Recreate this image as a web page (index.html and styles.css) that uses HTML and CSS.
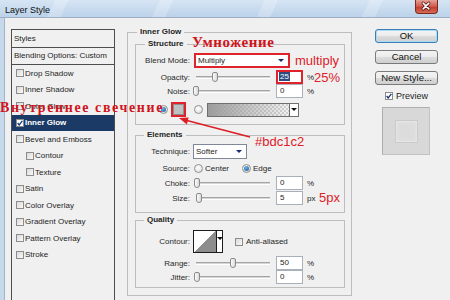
FILE: index.html
```html
<!DOCTYPE html>
<html lang="ru">
<head>
  <meta charset="UTF-8">
  <meta name="viewport" content="width=device-width, initial-scale=1.0">
  <title>Layer Style</title>
  <link rel="stylesheet" href="styles.css">
</head>
<body>
  <div class="titlebar">
    <span class="title">Layer Style</span>
    <span class="close">
      <svg width="23" height="14" viewBox="0 0 23 14">
        <path d="M8.5 4l6 6M14.5 4l-6 6" stroke="#4a1511" stroke-width="3.2" stroke-linecap="round"/>
        <path d="M8.5 4l6 6M14.5 4l-6 6" stroke="#fff" stroke-width="1.6" stroke-linecap="round"/>
      </svg>
    </span>
  </div>

  <div class="frame">
    <!-- styles list -->
    <div class="styles">
      <div class="styles-head">Styles</div>
      <div class="styles-head blending">Blending Options: Custom</div>
      <ul class="fx-list">
        <li><span class="cb"></span>Drop Shadow</li>
        <li><span class="cb"></span>Inner Shadow</li>
        <li><span class="cb"></span>Outer Glow</li>
        <li class="selected"><span class="cb"><svg width="6" height="6" viewBox="0 0 6 6"><path d="M0.6 3l1.6 2L5.4 0.8" fill="none" stroke="#1b3578" stroke-width="1.3"/></svg></span>Inner Glow</li>
        <li><span class="cb"></span>Bevel and Emboss</li>
        <li class="sub"><span class="cb"></span>Contour</li>
        <li class="sub"><span class="cb"></span>Texture</li>
        <li><span class="cb"></span>Satin</li>
        <li><span class="cb"></span>Color Overlay</li>
        <li><span class="cb"></span>Gradient Overlay</li>
        <li><span class="cb"></span>Pattern Overlay</li>
        <li><span class="cb"></span>Stroke</li>
      </ul>
    </div>

    <!-- settings -->
    <fieldset class="group outer">
      <legend>Inner Glow</legend>

      <fieldset class="group structure">
        <legend>Structure</legend>
        <div class="row tall">
          <span class="lbl">Blend Mode:</span>
          <span class="select marked blend-mode">Multiply<i class="arrow"></i></span>
        </div>
        <div class="row opacity">
          <span class="lbl">Opacity:</span>
          <span class="slider"><span class="track"></span><span class="thumb" style="left: 18px"></span></span>
          <span class="field marked"><span class="hl">25</span></span>
          <span class="unit">%</span>
        </div>
        <div class="row">
          <span class="lbl">Noise:</span>
          <span class="slider"><span class="track"></span><span class="thumb" style="left: -1px"></span></span>
          <span class="field">0</span>
          <span class="unit">%</span>
        </div>
        <div class="row tall color-row">
          <span class="radio on"></span>
          <span class="swatch"></span>
          <span class="radio"></span>
          <span class="gradient"><span class="gradient-fill"></span><span class="drop"><i class="arrow dark"></i></span></span>
        </div>
      </fieldset>

      <fieldset class="group elements">
        <legend>Elements</legend>
        <div class="row tall">
          <span class="lbl">Technique:</span>
          <span class="select technique">Softer<i class="arrow"></i></span>
        </div>
        <div class="row source">
          <span class="lbl">Source:</span>
          <span class="radio"></span><span class="opt">Center</span>
          <span class="radio on edge"></span><span class="opt">Edge</span>
        </div>
        <div class="row slim">
          <span class="lbl">Choke:</span>
          <span class="slider"><span class="track"></span><span class="thumb" style="left: 0px"></span></span>
          <span class="field">0</span>
          <span class="unit">%</span>
        </div>
        <div class="row slim">
          <span class="lbl">Size:</span>
          <span class="slider"><span class="track"></span><span class="thumb" style="left: 2px"></span></span>
          <span class="field">5</span>
          <span class="unit">px</span>
        </div>
      </fieldset>

      <fieldset class="group quality">
        <legend>Quality</legend>
        <div class="row contour-row">
          <span class="lbl">Contour:</span>
          <span class="contour"><span class="curve"></span><span class="drop"><i class="arrow dark"></i></span></span>
          <span class="cb anti"></span><span class="opt">Anti-aliased</span>
        </div>
        <div class="row range">
          <span class="lbl">Range:</span>
          <span class="slider"><span class="track"></span><span class="thumb" style="left: 36px"></span></span>
          <span class="field">50</span>
          <span class="unit">%</span>
        </div>
        <div class="row">
          <span class="lbl">Jitter:</span>
          <span class="slider"><span class="track"></span><span class="thumb" style="left: 0px"></span></span>
          <span class="field">0</span>
          <span class="unit">%</span>
        </div>
      </fieldset>
    </fieldset>

    <!-- buttons -->
    <div class="side">
      <button class="btn default">OK</button>
      <button class="btn">Cancel</button>
      <button class="btn">New Style...</button>
      <div class="preview-toggle">
        <span class="cb"><svg width="6" height="6" viewBox="0 0 6 6"><path d="M0.6 3l1.6 2L5.4 0.8" fill="none" stroke="#1b3578" stroke-width="1.3"/></svg></span>Preview
      </div>
      <div class="preview"><div class="preview-inner"></div></div>
    </div>
  </div>

  <!-- red notes drawn over the dialog -->
  <span class="note ru note-mult">Умножение</span>
  <span class="note ru note-inner">Внутреннее свечение</span>
  <span class="note note-multiply">multiply</span>
  <span class="note note-opacity">25%</span>
  <span class="note note-color">#bdc1c2</span>
  <span class="note note-size">5px</span>
  <svg class="pointer" width="90" height="32" viewBox="0 0 90 32">
    <line x1="80" y1="27" x2="15" y2="10" stroke="#dc1f27" stroke-width="1.8"/>
    <polygon points="9,8 16.9,14.4 18.6,7.6" fill="#dc1f27"/>
  </svg>
</body>
</html>
```

FILE: styles.css
```css
* {
  box-sizing: border-box;
}
body {
  margin: 0;
  width: 450px;
  height: 300px;
  overflow: hidden;
  position: relative;
  background: #f0f0f0;
  font-family: "Liberation Sans", Arial, sans-serif;
  font-size: 8px;
  color: #1e1e1e;
}

/* title bar */
.titlebar {
  height: 18px;
  display: flex;
  justify-content: space-between;
  align-items: flex-start;
  padding-left: 5px;
  border-bottom: 1px solid #9cafc4;
  background:
    repeating-linear-gradient(115deg, rgba(255,255,255,0) 0 50px, rgba(255,255,255,.22) 50px 62px, rgba(255,255,255,0) 62px 95px),
    linear-gradient(#d6e5f4, #bcd2ea);
}
.title {
  margin-top: 4px;
  font-size: 9px;
  line-height: 12px;
  color: #111;
}
.close {
  width: 23px;
  height: 14px;
  margin-right: 12px;
  border: 1px solid #7a2a22;
  border-top: none;
  border-radius: 0 0 4px 4px;
  background: linear-gradient(#e6a196, #d0584a 50%, #c23a2a 52%, #d66a55);
  display: flex;
}
.close svg {
  margin: -1px 0 0 -1px;
}

.frame {
  height: 282px;
  display: flex;
  align-items: flex-start;
  padding: 9px 0 0 7px;
  border-left: 4px solid #c6d8eb;
  box-shadow: inset 1px 0 #a5b4c4;
}

/* styles list */
.styles {
  width: 104px;
  height: 280px;
  margin-top: 2px;
  border: 1px solid #4d4d4d;
}
.styles-head {
  height: 18px;
  line-height: 17px;
  padding-left: 2px;
  border-bottom: 1px solid #4d4d4d;
}
.styles-head.blending {
  height: 17px;
  line-height: 16px;
}
.fx-list {
  list-style: none;
  margin: 0;
  padding: 0;
}
.fx-list li {
  height: 16.5px;
  display: flex;
  align-items: center;
  padding-left: 4px;
}
.fx-list li.sub {
  padding-left: 14px;
}
.fx-list li.selected {
  background: #1b3a66;
  color: #fff;
  font-weight: bold;
}
.cb {
  width: 8px;
  height: 8px;
  margin-right: 1px;
  border: 1px solid #8c8c8c;
  background: linear-gradient(135deg, #d9d9d9, #fafafa);
  display: inline-flex;
  align-items: center;
  justify-content: center;
  flex: none;
}
.selected .cb {
  background: #fff;
}

/* group boxes */
.group {
  margin: 0;
  padding: 0;
  border: 1px solid #bdbdbd;
  min-width: 0;
}
.group legend {
  padding: 0 3px;
  margin-left: 8px;
  font-weight: bold;
  line-height: 10px;
}
.outer {
  width: 225px;
  margin-left: 12px;
  padding: 0 6px 7px 7px;
}
.outer > legend {
  margin-left: 2px;
}
.structure {
  margin-top: 2px;
  padding: 4px 0 7px;
}
.structure > legend {
  margin-left: 9px;
}
.elements {
  margin-top: 5px;
  padding: 4px 0 7px;
}
.quality {
  margin-top: 2px;
  padding: 5px 0 3px;
}

/* rows */
.row {
  height: 14px;
  display: flex;
  align-items: center;
}
.row.tall {
  height: 15px;
}
.row.opacity,
.row.source {
  margin-top: 2px;
}
.row.slim {
  margin-top: 1px;
}
.row.color-row {
  margin-top: 4px;
}
.row.contour-row {
  height: 23px;
}
.row.range {
  margin-top: 3px;
}
.lbl {
  width: 54px;
  margin-right: 4px;
  text-align: right;
  color: #2a2a2a;
}
.unit {
  margin-left: 4px;
}
.opt {
  margin-left: 2px;
}

.select {
  height: 15px;
  display: flex;
  align-items: center;
  padding: 0 4px 0 2px;
  background: #fff;
  border: 1px solid #7e8896;
}
.blend-mode {
  width: 96px;
}
.technique {
  width: 54px;
  margin-left: -1px;
}
.marked {
  border: 2px solid #e0222a;
}
.arrow {
  margin-left: auto;
  width: 0;
  height: 0;
  border-left: 3px solid transparent;
  border-right: 3px solid transparent;
  border-top: 3px solid #1b2c6e;
}
.arrow.dark {
  margin: 0;
  border-top-color: #111;
}

.slider {
  position: relative;
  width: 77px;
  height: 10px;
  margin-right: 5px;
  display: flex;
  align-items: center;
}
.track {
  flex: 1;
  height: 3px;
  margin: 0 1px 0 2px;
  background: #d6d6d6;
  border-top: 1px solid #a4a4a4;
  border-bottom: 1px solid #fff;
}
.thumb {
  position: absolute;
  top: 0;
  width: 6px;
  height: 10px;
  border: 1px solid #8a8a8a;
  border-radius: 2px 2px 3px 3px;
  background: linear-gradient(90deg, #fdfdfd, #d9d9d9);
}

.field {
  width: 27px;
  height: 14px;
  padding-left: 3px;
  line-height: 12px;
  background: #fff;
  border: 1px solid #a9b0b9;
}
.field.marked {
  border: 2px solid #e0222a;
  padding-left: 1px;
  line-height: 10px;
}
.hl {
  background: #2b4c7c;
  color: #fff;
  padding: 0 1px;
}

.radio {
  width: 9px;
  height: 9px;
  border-radius: 50%;
  border: 1px solid #8f8f8f;
  background: radial-gradient(circle at 40% 35%, #fff, #dadada);
  display: inline-flex;
  align-items: center;
  justify-content: center;
  flex: none;
}
.radio.on::after {
  content: "";
  width: 5px;
  height: 5px;
  border-radius: 50%;
  background: radial-gradient(circle at 40% 35%, #6fb3ea, #134f8e);
}
.radio.edge {
  margin-left: 13px;
}

.color-row .radio.on {
  margin-left: 23px;
}
.swatch {
  width: 15px;
  height: 15px;
  margin: 0 8px 0 3px;
  border: 2px solid #e0222a;
  background: #bdc1c2;
  box-shadow: inset 0 0 0 1px #8c8f90;
}
.gradient {
  width: 92px;
  height: 14px;
  margin-left: 4px;
  display: flex;
  border: 1px solid #6f6f6f;
  background: #fff;
}
.gradient-fill {
  flex: 1;
  background:
    linear-gradient(90deg, #9c9c9c, rgba(170,170,170,0.15)),
    repeating-conic-gradient(#d6d6d6 0 25%, #fff 0 50%) 0 0 / 4px 4px;
}
.drop {
  width: 9px;
  display: flex;
  align-items: center;
  justify-content: center;
  border-left: 1px solid #6f6f6f;
  background: #fff;
}

.contour {
  width: 30px;
  height: 23px;
  margin-left: -1px;
  display: flex;
  border: 1px solid #1c1c1c;
  background: #fff;
}
.curve {
  flex: 1;
  background: linear-gradient(to top left, #8d8d8d 50%, #fff 50%);
}
.contour .drop {
  width: 6px;
  border-left: 1px solid #1c1c1c;
  align-items: flex-start;
  padding-top: 6px;
}
.cb.anti {
  margin-left: 12px;
}

/* right side */
.side {
  width: 63px;
  margin: 2px 0 0 23px;
  display: flex;
  flex-direction: column;
}
.btn {
  height: 14px;
  margin: 0 0 7px;
  padding: 0;
  font-family: inherit;
  font-size: 9.5px;
  line-height: 12px;
  color: #111;
  border: 1px solid #7a7a7a;
  border-radius: 3px;
  background: linear-gradient(#f4f4f4, #ebebeb 50%, #dcdcdc 51%, #cfcfcf);
}
.btn.default {
  border-color: #3d7db5;
  box-shadow: inset 0 0 0 1px #a8dcf5;
}
.preview-toggle {
  height: 10px;
  margin: -1px 0 0 10px;
  display: flex;
  align-items: center;
  font-size: 9px;
}
.preview-toggle .cb {
  margin-right: 3px;
  background: #fff;
}
.preview {
  width: 48px;
  height: 48px;
  margin: 6px 0 0 7px;
  display: flex;
  align-items: center;
  justify-content: center;
  background: #d8d8d8;
  border: 1px solid #c2c2c2;
  border-top-color: #aeaeae;
  border-left-color: #aeaeae;
}
.preview-inner {
  width: 23px;
  height: 23px;
  background: #dcdcdc;
  border: 1px solid #cbcbcb;
  box-shadow: inset 0 0 3px 1px #e8e8e8;
}

/* annotations */
.note {
  position: absolute;
  color: #de2028;
  font-size: 13px;
  line-height: 13px;
  white-space: nowrap;
}
.note.ru {
  font-family: "Liberation Serif", "Times New Roman", serif;
  font-weight: bold;
  color: #d0141c;
}
.note-mult {
  left: 192px;
  top: 35px;
  font-size: 15px;
  line-height: 15px;
  letter-spacing: 0.6px;
}
.note-inner {
  left: 0;
  top: 101px;
  font-size: 14px;
  line-height: 14px;
  letter-spacing: 1.6px;
}
.note-multiply {
  left: 295px;
  top: 54px;
}
.note-opacity {
  left: 314px;
  top: 71px;
}
.note-color {
  left: 255px;
  top: 135px;
}
.note-size {
  left: 319px;
  top: 191px;
}
.pointer {
  position: absolute;
  left: 170px;
  top: 110px;
}
```
